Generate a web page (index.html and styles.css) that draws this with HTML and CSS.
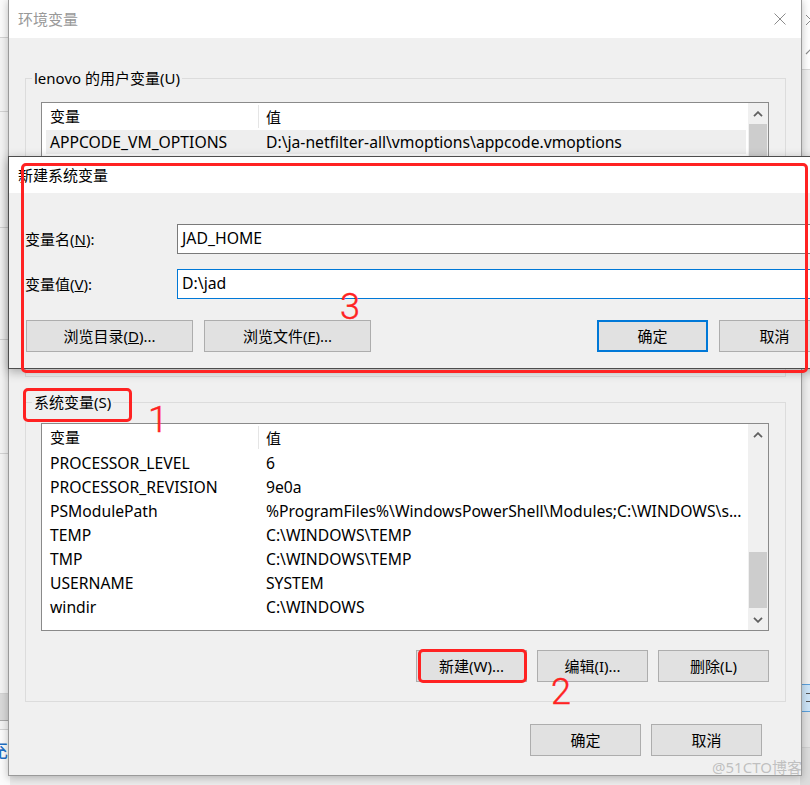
FILE: index.html
```html
<!DOCTYPE html>
<html lang="zh-CN">
<head>
<meta charset="utf-8">
<title>环境变量</title>
<link rel="stylesheet" href="styles.css">
</head>
<body>
<div class="desk">
  <div class="bg-left">
    <div class="seg s1"></div>
    <div class="seg s2"></div>
    <div class="seg s3"></div>
    <div class="seg s4"></div>
    <div class="seg s5"></div>
    <div class="seg s6"></div>
    <div class="seg s7"></div>
    <div class="seg s8"></div>
    <div class="seg s9"><span class="bg-glyph">充</span></div>
  </div>
  <div class="bg-right">
    <div class="rseg r1">
      <svg class="r-x" width="12" height="12" viewBox="0 0 12 12"><path d="M1 1L11 11M11 1L1 11" stroke="#8a8a8a" stroke-width="1"/></svg>
      <svg class="r-up" width="10" height="6" viewBox="0 0 10 6"><path d="M1 5L5 1L9 5" fill="none" stroke="#8a8a8a" stroke-width="1.2"/></svg>
    </div>
    <div class="rseg r2"></div>
    <div class="rseg r3"><span class="r-lines"></span></div>
    <div class="rseg r4"></div>
    <div class="rseg r5"></div>
  </div>

  <div class="win main">
    <div class="title">
      <span class="title-text inactive">环境变量</span>
      <svg class="close" width="12" height="12" viewBox="0 0 12 12"><path d="M0.5 0.5L11.5 11.5M11.5 0.5L0.5 11.5" stroke="#8c8c8c" stroke-width="1"/></svg>
    </div>
    <div class="client">
      <fieldset class="group g-user">
        <legend>lenovo 的用户变量(U)</legend>
        <div class="group-body gb-user">
          <div class="list list-user">
            <div class="list-main">
              <div class="row head"><span class="c1">变量</span><span class="c2">值</span></div>
              <div class="row sel"><span class="c1">APPCODE_VM_OPTIONS</span><span class="c2">D:\ja-netfilter-all\vmoptions\appcode.vmoptions</span></div>
              <div class="row"><span class="c1">CLION_VM_OPTIONS</span><span class="c2">D:\ja-netfilter-all\vmoptions\clion.vmoptions</span></div>
              <div class="row"><span class="c1">DATAGRIP_VM_OPTIONS</span><span class="c2">D:\ja-netfilter-all\vmoptions\datagrip.vmoptions</span></div>
              <div class="row"><span class="c1">GOLAND_VM_OPTIONS</span><span class="c2">D:\ja-netfilter-all\vmoptions\goland.vmoptions</span></div>
            </div>
            <div class="vscroll vs-user">
              <div class="arrow"><svg width="10" height="6" viewBox="0 0 10 6"><path d="M1 5.2L5 1.2L9 5.2" fill="none" stroke="#606060" stroke-width="1.8"/></svg></div>
              <div class="track"><div class="thumb th-user"></div></div>
              <div class="arrow"><svg width="10" height="6" viewBox="0 0 10 6"><path d="M1 0.8L5 4.8L9 0.8" fill="none" stroke="#606060" stroke-width="1.8"/></svg></div>
            </div>
          </div>
          <div class="btn-row">
            <button class="btn">新建(N)...</button>
            <button class="btn">编辑(E)...</button>
            <button class="btn">删除(D)</button>
          </div>
        </div>
      </fieldset>

      <fieldset class="group g-sys">
        <legend>系统变量(S)</legend>
        <div class="group-body gb-sys">
          <div class="list list-sys">
            <div class="list-main">
              <div class="row head"><span class="c1">变量</span><span class="c2">值</span></div>
              <div class="row"><span class="c1">PROCESSOR_LEVEL</span><span class="c2">6</span></div>
              <div class="row"><span class="c1">PROCESSOR_REVISION</span><span class="c2">9e0a</span></div>
              <div class="row"><span class="c1">PSModulePath</span><span class="c2">%ProgramFiles%\WindowsPowerShell\Modules;C:\WINDOWS\s...</span></div>
              <div class="row"><span class="c1">TEMP</span><span class="c2">C:\WINDOWS\TEMP</span></div>
              <div class="row"><span class="c1">TMP</span><span class="c2">C:\WINDOWS\TEMP</span></div>
              <div class="row"><span class="c1">USERNAME</span><span class="c2">SYSTEM</span></div>
              <div class="row"><span class="c1">windir</span><span class="c2">C:\WINDOWS</span></div>
            </div>
            <div class="vscroll vs-sys">
              <div class="arrow"><svg width="10" height="6" viewBox="0 0 10 6"><path d="M1 5.2L5 1.2L9 5.2" fill="none" stroke="#606060" stroke-width="1.8"/></svg></div>
              <div class="track"><div class="thumb th-sys"></div></div>
              <div class="arrow"><svg width="10" height="6" viewBox="0 0 10 6"><path d="M1 0.8L5 4.8L9 0.8" fill="none" stroke="#606060" stroke-width="1.8"/></svg></div>
            </div>
          </div>
          <div class="btn-row">
            <button class="btn">新建(W)...</button>
            <button class="btn">编辑(I)...</button>
            <button class="btn">删除(L)</button>
          </div>
        </div>
      </fieldset>

      <div class="btn-row footer">
        <button class="btn">确定</button>
        <button class="btn">取消</button>
      </div>
    </div>
  </div>

  <div class="win sub">
    <div class="title sub-title"><span class="title-text">新建系统变量</span></div>
    <div class="sub-client">
      <div class="field"><span class="label">变量名(<u>N</u>):</span><div class="input">JAD_HOME</div></div>
      <div class="field f2"><span class="label">变量值(<u>V</u>):</span><div class="input focus">D:\jad</div></div>
      <div class="sub-btns">
        <button class="btn wide">浏览目录(<u>D</u>)...</button>
        <button class="btn wide">浏览文件(<u>F</u>)...</button>
        <span class="spacer"></span>
        <button class="btn default">确定</button>
        <button class="btn">取消</button>
      </div>
    </div>
  </div>

  <div class="mark box3"></div>
  <div class="mark box1"></div>
  <div class="mark box2"></div>
  <div class="num n1">1</div>
  <div class="num n2">2</div>
  <div class="num n3">3</div>

  <div class="watermark">@51CTO博客</div>
</div>
</body>
</html>
```

FILE: styles.css
```css
* { box-sizing: border-box; }
html, body { margin: 0; padding: 0; }
body {
  width: 810px;
  height: 785px;
  overflow: hidden;
  background: #f0f0f0;
  font-family: "Noto Sans", "Noto Sans CJK SC", sans-serif;
  font-size: 15px;
  line-height: 20px;
  color: #000;
}
.desk {
  position: relative;
  width: 810px;
  height: 785px;
  overflow: hidden;
  background: #ececec;
}

/* background windows */
.bg-left {
  position: absolute;
  left: 0; top: 0;
  width: 10px; height: 785px;
  display: flex;
  flex-direction: column;
  background: #f3f3f3;
}
.seg { border-bottom: 1px solid #d2d2d2; flex: none; }
.s1 { height: 38px; background: #fafafa; }
.s2 { height: 74px; }
.s3 { height: 116px; }
.s4 { height: 112px; }
.s5 { height: 114px; }
.s6 { height: 240px; }
.s7 { height: 27px; background: #d9d9d9; border-bottom-color: #a8a8a8; }
.s8 { height: 9px; }
.s9 { flex: 1; background: #fbfbfb; border-bottom: none; position: relative; overflow: hidden; }
.bg-glyph {
  position: absolute;
  left: -12px; top: 9px;
  font-family: "Noto Sans CJK SC", sans-serif;
  font-size: 20px;
  line-height: 22px;
  color: #1f6fc5;
}
.bg-right {
  position: absolute;
  left: 800px; top: 0;
  width: 10px; height: 785px;
  display: flex;
  flex-direction: column;
  background: #f0f0f0;
}
.rseg { flex: none; position: relative; overflow: hidden; }
.r1 { height: 70px; background: #fff; border-bottom: 1px solid #d8d8d8; }
.r-x { position: absolute; left: 5px; top: 14px; }
.r-up { position: absolute; left: 5px; top: 49px; }
.r2 { height: 614px; background: #f0f0f0; }
.r3 { height: 28px; background: #cce4f7; border-top: 1px solid #5aa0dc; border-bottom: 1px solid #5aa0dc; }
.r-lines {
  position: absolute; left: 6px; top: 8px;
  width: 6px; height: 9px;
  border-top: 1px solid #555; border-bottom: 1px solid #555;
}
.r4 { height: 36px; background: #e3e3e3; border-bottom: 1px solid #d0d0d0; }
.r5 { flex: 1; background: #dcdcdc; }

/* windows */
.win {
  position: absolute;
  background: #f0f0f0;
}
.main {
  left: 8px; top: -1px;
  width: 794px;
  border: 1px solid #9a9a9a;
  box-shadow: 0 2px 8px rgba(0,0,0,0.25);
}
.title {
  height: 38px;
  background: #fff;
  display: flex;
  align-items: center;
  justify-content: space-between;
  padding: 0 15px 0 9px;
}
.title-text {
  font-family: "Noto Sans CJK SC", sans-serif;
  font-size: 15px;
  line-height: 20px;
}
.title-text.inactive { color: #999; }
.close { display: block; }

.client {
  padding: 0 0 19px 0;
}
.group {
  margin: 0 15px 0 16px;
  padding: 0;
  border: 1px solid #dcdcdc;
  min-width: 0;
}
.g-user { margin-top: 30px; }
.g-sys { margin-top: 15px; }
.group legend {
  margin-left: 6px;
  padding: 0 2px;
  line-height: 20px;
  font-size: 15px;
}
.group-body { padding: 0 16px 0 15px; }
.gb-user { padding-top: 14px; padding-bottom: 18px; }
.gb-sys { padding-top: 11px; padding-bottom: 19px; }

.list {
  border: 1px solid #8a8a8a;
  background: #fff;
  display: flex;
  overflow: hidden;
}
.list-user { height: 206px; }
.list-sys { height: 208px; }
.list-main { flex: 1; overflow: hidden; min-width: 0; }
.row {
  display: flex;
  height: 24px;
  align-items: center;
  margin: 0 2px 0 4px;
  white-space: nowrap;
  font-size: 15.7px;
}
.row.head { height: 27px; font-size: 15px; }
.row.sel { background: #eeeeee; }
.c1 { width: 213px; flex: none; padding-left: 4px; overflow: hidden; }
.head .c1 { border-right: 1px solid #e5e5e5; height: 23px; line-height: 23px; }
.c2 { padding-left: 7px; flex: 1; overflow: hidden; }

.vscroll {
  width: 20px;
  flex: none;
  background: #f0f0f0;
  display: flex;
  flex-direction: column;
}
.arrow {
  height: 21px;
  flex: none;
  display: flex;
  align-items: center;
  justify-content: center;
}
.arrow svg { display: block; }
.track { flex: 1; }
.thumb { background: #cdcdcd; margin: 0 1px; }
.th-user { height: 80px; }
.th-sys { height: 56px; margin-top: 107px; }

.btn-row {
  display: flex;
  justify-content: flex-end;
  gap: 10px;
  margin-top: 18px;
}
.gb-sys .btn-row { margin-top: 19px; }
.btn {
  width: 111px;
  height: 32px;
  padding: 0;
  margin: 0;
  background: #e1e1e1;
  border: 1px solid #adadad;
  font-family: "Noto Sans", "Noto Sans CJK SC", sans-serif;
  font-size: 15px;
  line-height: 20px;
  color: #000;
  flex: none;
}
.footer {
  margin-top: 22px;
  padding-right: 39px;
}

/* sub dialog */
.sub {
  left: 8px; top: 156px;
  width: 839px;
  border: 1px solid #4d4d4d;
  box-shadow: 0 3px 10px rgba(0,0,0,0.3);
}
.sub-title { height: 36px; }
.sub-client { padding: 31px 16px 16px 16px; }
.field {
  display: flex;
  align-items: center;
  height: 30px;
}
.f2 { margin-top: 15px; }
.label { width: 152px; flex: none; }
.input {
  flex: 1;
  height: 30px;
  background: #fff;
  border: 1px solid #7a7a7a;
  padding-left: 4px;
  line-height: 27px;
  font-size: 15.8px;
}
.input.focus { border-color: #0078d7; }
.sub-btns {
  display: flex;
  margin-top: 21px;
  gap: 11px;
}
.btn.wide { width: 167px; }
.sub-btns .btn.wide:first-child { margin-left: 1px; }
.spacer { flex: 1; }
.btn.default { border: 2px solid #0078d7; }

/* annotations */
.mark {
  position: absolute;
  border: 3px solid #ff2222;
  border-radius: 5px;
}
.box3 { left: 21px; top: 163px; width: 787px; height: 210px; }
.box1 { left: 23px; top: 388px; width: 109px; height: 34px; }
.box2 { left: 418px; top: 649px; width: 109px; height: 34px; }
.num {
  position: absolute;
  font-family: "Roboto", "DejaVu Sans", sans-serif;
  font-weight: 300;
  font-size: 36px;
  line-height: 36px;
  color: #ff2222;
  -webkit-text-stroke: 0.4px #ff2222;
}
.n1 { left: 148px; top: 402px; }
.n2 { left: 551px; top: 674px; }
.n3 { left: 340px; top: 289px; }

.watermark {
  position: absolute;
  left: 712px; top: 757px;
  font-family: "Noto Sans", "Noto Sans CJK SC", sans-serif;
  font-size: 15px;
  line-height: 20px;
  color: rgba(150,150,150,0.55);
}
```
